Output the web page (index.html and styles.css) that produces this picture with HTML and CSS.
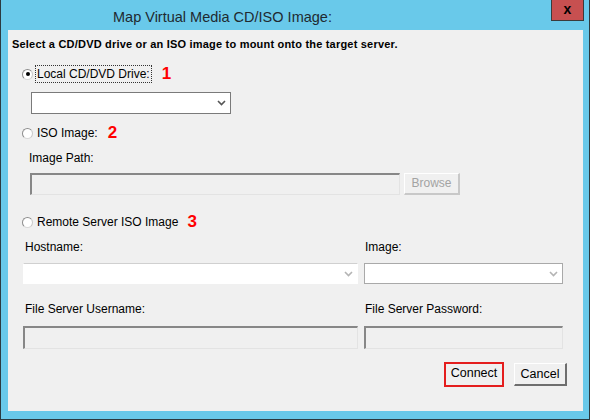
FILE: index.html
```html
<!DOCTYPE html>
<html>
<head>
<meta charset="utf-8">
<link rel="stylesheet" href="styles.css">
</head>
<body>
<div class="window">
  <div class="titlebar">
    <div class="title">Map Virtual Media CD/ISO Image:</div>
    <div class="close">x</div>
  </div>
  <div class="panel">
    <div class="heading">Select a CD/DVD drive or an ISO image to mount onto the target server.</div>

    <div class="radio-row r1">
      <span class="radio checked"></span>
      <span class="rlabel focus">Local CD/DVD Drive:</span>
      <span class="num n1">1</span>
    </div>
    <div class="combo local">
      <svg class="chev" width="9" height="6" viewBox="0 0 9 6"><polyline points="1,1 4.5,4.5 8,1" fill="none" stroke="#555" stroke-width="1.6"/></svg>
    </div>

    <div class="radio-row r2">
      <span class="radio"></span>
      <span class="rlabel">ISO Image:</span>
      <span class="num n2">2</span>
    </div>
    <div class="label lpath">Image Path:</div>
    <div class="path-row">
      <div class="field path"></div>
      <div class="btn browse">Browse</div>
    </div>

    <div class="radio-row r3">
      <span class="radio"></span>
      <span class="rlabel">Remote Server ISO Image</span>
      <span class="num n3">3</span>
    </div>
    <div class="two-col labels1">
      <div class="label cl">Hostname:</div>
      <div class="label cr">Image:</div>
    </div>
    <div class="two-col combos">
      <div class="combo dis host">
        <svg class="chev" width="9" height="6" viewBox="0 0 9 6"><polyline points="1,1 4.5,4.5 8,1" fill="none" stroke="#b4b4b4" stroke-width="1.6"/></svg>
      </div>
      <div class="combo dis img">
        <svg class="chev" width="9" height="6" viewBox="0 0 9 6"><polyline points="1,1 4.5,4.5 8,1" fill="none" stroke="#b4b4b4" stroke-width="1.6"/></svg>
      </div>
    </div>
    <div class="two-col labels2">
      <div class="label cl">File Server Username:</div>
      <div class="label cr">File Server Password:</div>
    </div>
    <div class="two-col fields">
      <div class="field user"></div>
      <div class="field pass"></div>
    </div>

    <div class="actions">
      <div class="hilite"><div class="btn connect">Connect</div></div>
      <div class="btn cancel">Cancel</div>
    </div>
  </div>
</div>
</body>
</html>
```

FILE: styles.css
```css
html, body {
  margin: 0;
  padding: 0;
  background: #6ac9ea;
}
.window {
  width: 590px;
  height: 420px;
  box-sizing: border-box;
  background: #69c9ea;
  border-left: 1px solid #2c3a40;
  border-right: 1px solid #2c3a40;
  border-bottom: 1px solid #2c3a40;
  display: flex;
  flex-direction: column;
  font-family: "Liberation Sans", Arial, sans-serif;
}
.titlebar {
  height: 30px;
  display: flex;
  align-items: flex-start;
}
.title {
  font-family: "Liberation Sans", Arial, sans-serif;
  font-size: 14.5px;
  color: #1f2a30;
  margin-left: 112px;
  margin-top: 9px;
  line-height: 17px;
  flex: 1;
}
.close {
  width: 31px;
  height: 20px;
  margin-right: 5px;
  background: #c75050;
  border: 1px solid #3b3b3b;
  border-top: none;
  font-weight: bold;
  font-size: 14px;
  line-height: 18px;
  text-align: center;
  color: #000;
}
.panel {
  margin: 0 6px 8px 7px;
  flex: 1;
  background: #f0f0f0;
  display: flex;
  flex-direction: column;
  font-size: 12px;
  color: #000;
}
.heading {
  font-weight: bold;
  font-size: 11px;
  letter-spacing: 0.2px;
  line-height: 14px;
  margin: 7px 0 0 4px;
}
.radio-row {
  display: flex;
  align-items: center;
  height: 18px;
  margin-left: 14px;
}
.r1 { margin-top: 14px; }
.r2 { margin-top: 10px; }
.r3 { margin-top: 18px; }
.radio {
  width: 9px;
  height: 9px;
  border-radius: 50%;
  border: 1px solid #8d8d8d;
  border-right-color: #c8c8c8;
  border-bottom-color: #d8d8d8;
  background: #fff;
  position: relative;
  flex: none;
}
.radio.checked::after {
  content: "";
  position: absolute;
  left: 2.5px;
  top: 2.5px;
  width: 4px;
  height: 4px;
  border-radius: 50%;
  background: #000;
}
.rlabel {
  margin-left: 2px;
  padding: 1px 1px;
  line-height: 14px;
  border: 1px dotted transparent;
}
.rlabel.focus { border-color: #333; }
.num {
  color: #ff0000;
  font-size: 17px;
  font-weight: bold;
  line-height: 18px;
  margin-left: 10px;
}
.n3 { margin-left: 7px; }
.n2 { margin-left: 8px; }
.combo {
  height: 20px;
  background: #fff;
  border: 1px solid #7a7a7a;
  display: flex;
  align-items: center;
  justify-content: flex-end;
  box-sizing: content-box;
}
.chev { margin-right: 4px; }
.combo.local {
  width: 198px;
  margin: 9px 0 0 23px;
}
.label {
  line-height: 14px;
  color: #000;
}
.lpath { margin: 9px 0 0 21px; }
.path-row {
  display: flex;
  margin: 8px 0 0 22px;
  gap: 4px;
}
.field {
  background: #f0f0f0;
  box-sizing: border-box;
  border: 1px solid #e3e3e3;
  border-top: 2px solid #878787;
  border-left: 2px solid #878787;
}
.field.path { width: 370px; height: 22px; }
.btn {
  box-sizing: border-box;
  background: #f0f0f0;
  border: 1px solid #fff;
  border-right: 2px solid #6e6e6e;
  border-bottom: 2px solid #6e6e6e;
  text-align: center;
  font-size: 12px;
  color: #000;
}
.btn.browse {
  width: 56px;
  height: 22px;
  line-height: 19px;
  color: #a3a3a3;
  border-right-color: #c8c8c8;
  border-bottom-color: #c8c8c8;
}
.two-col {
  display: flex;
  margin-left: 15px;
  gap: 6px;
}
.two-col .cl { width: 333px; padding-left: 2px; }
.two-col .cr { padding-left: 1px; }
.labels1 { margin-top: 9px; }
.combos { margin-top: 9px; }
.labels2 { margin-top: 18px; }
.fields { margin-top: 10px; }
.combo.dis { height: 19px; }
.combo.host { width: 333px; border-color: #d0d0d0 #ffffff #ffffff #ffffff; }
.combo.img { width: 197px; border-color: #a9a9a9; }
.field.user { width: 335px; height: 23px; }
.field.pass { width: 199px; height: 23px; }
.actions {
  display: flex;
  justify-content: flex-end;
  align-items: flex-start;
  margin-top: 13px;
  margin-right: 16px;
  gap: 10px;
}
.hilite {
  border: 2px solid #e41e1e;
  padding: 0;
}
.btn.connect {
  width: 56px;
  height: 21px;
  line-height: 19px;
  font-size: 12.5px;
  border: none;
}
.btn.cancel {
  width: 53px;
  height: 23px;
  line-height: 21px;
  font-size: 12.5px;
  margin-top: 1px;
}
```
